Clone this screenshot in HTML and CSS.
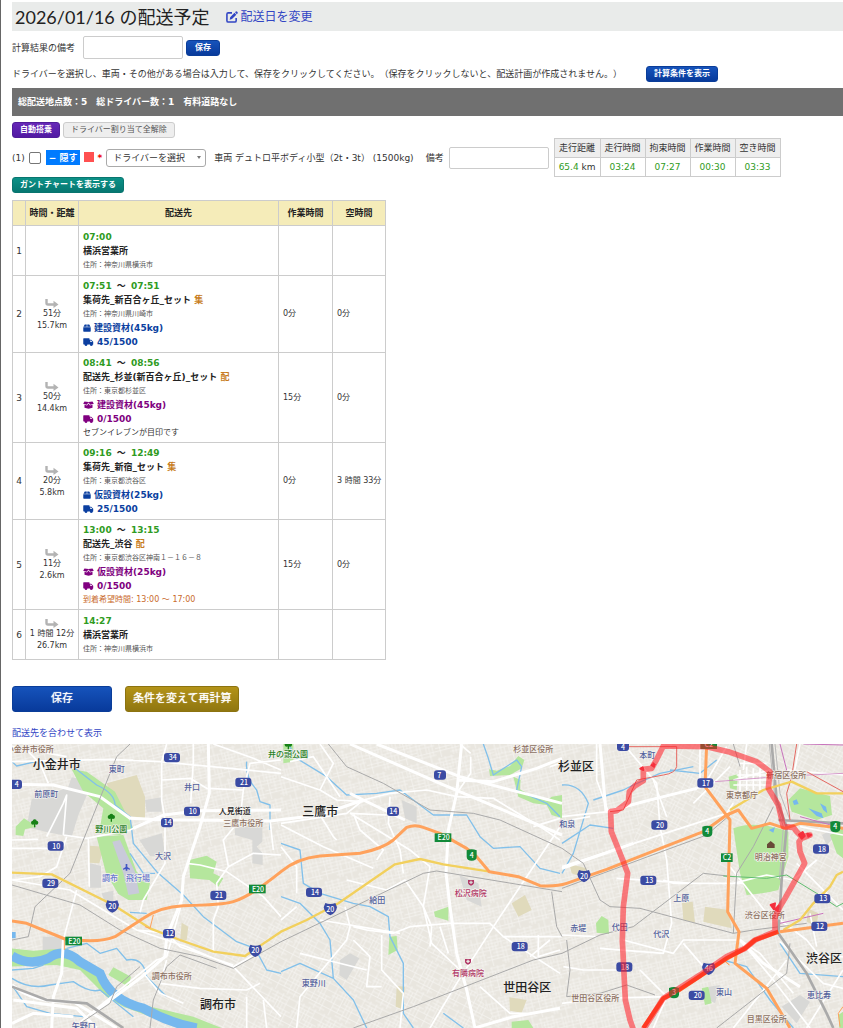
FILE: index.html
```html
<!DOCTYPE html>
<html lang="ja">
<head>
<meta charset="utf-8">
<meta name="viewport" content="width=device-width, initial-scale=1">
<title>配送予定</title>
<link rel="stylesheet" href="styles.css">
</head>
<body>
<svg class="defs" aria-hidden="true">
  <symbol id="i-arrow" viewBox="0 0 14 9"><path d="M1.500 0V4Q1.500 5.500 3 5.500H9" fill="none" stroke="#b3b3b3" stroke-width="2.400"/><path d="M8.500 1.800L13.500 5.500L8.500 9Z" fill="#b3b3b3"/></symbol>
  <symbol id="i-box" viewBox="0 0 9 9"><path d="M2 0.500H4.200V3H.5ZM4.800.5H7L8.500 3H4.800ZM.3 3.600H8.700V8Q8.700 8.700 8 8.700H1Q.3 8.700 .3 8Z" fill="currentColor"/></symbol>
  <symbol id="i-open" viewBox="0 0 12 9"><path d="M1.500.5L6 1.200L10.500.5L12 3.200L8 4.200L6 1.700L4 4.200L0 3.200ZM1.500 4.300L4.300 5L6 2.800L7.700 5L10.500 4.300V7.500L6 8.800L1.500 7.500Z" fill="currentColor"/></symbol>
  <symbol id="i-truck" viewBox="0 0 12 9"><path d="M.7.2H6.600Q7.200.2 7.200.8V2H9L11.300 4.300V7.200H10.800A1.600 1.600 0 0 1 7.500 7.200H4.800A1.600 1.600 0 0 1 1.500 7.200H.7Q.1 7.200 .1 6.600V.8Q.1.2 .7.2ZM8 2.900V4.500H10.300L8.700 2.900Z" fill="currentColor" fill-rule="evenodd"/><circle cx="3.200" cy="7.500" r="1.200" fill="currentColor"/><circle cx="9.200" cy="7.500" r="1.200" fill="currentColor"/></symbol>
</svg>
<main class="page">
  <header class="title-bar">
    <h1>2026/01/16 の配送予定</h1>
    <a class="date-link" href="#"><svg class="edit" viewBox="0 0 13 13" aria-hidden="true"><path d="M6.500 2H2.500Q1 2 1 3.500V10.500Q1 12 2.500 12H9.500Q11 12 11 10.500V7.500" fill="none" stroke="currentColor" stroke-width="1.700"/><path d="M4 9.500L4.500 6.700L9.200 2L11.200 4L6.500 8.800ZM9.800 1.400L10.600.6Q11.300 0 12 .7L12.500 1.200Q13 1.900 12.500 2.600L11.700 3.400Z" fill="currentColor"/></svg>配送日を変更</a>
  </header>
  <div class="note-row">
    <label for="note">計算結果の備考</label>
    <input class="field note" id="note" type="text">
    <button class="btn blue" type="button">保存</button>
  </div>
  <div class="help-row">
    <p>ドライバーを選択し、車両・その他がある場合は入力して、保存をクリックしてください。（保存をクリックしないと、配送計画が作成されません。）</p>
    <button class="btn blue" type="button">計算条件を表示</button>
  </div>
  <div class="summary">総配送地点数：5　総ドライバー数：1　有料道路なし</div>
  <div class="actions">
    <button class="btn purple" type="button">自動搭乗</button>
    <button class="btn plain" type="button">ドライバー割り当て全解除</button>
  </div>
  <div class="driver-row">
    <label class="number" for="driver-check">(1)</label>
    <input class="check" id="driver-check" type="checkbox">
    <button class="hide" type="button">− 隠す</button>
    <span class="swatch"></span>
    <span class="required">*</span>
    <span class="select-wrap"><select class="select" aria-label="ドライバー"><option>ドライバーを選択</option></select></span>
    <span class="vehicle">車両 デュトロ平ボディ小型（2t・3t） (1500kg)</span>
    <label class="remark-label" for="remark">備考</label>
    <input class="field remark" id="remark" type="text">
    <table class="totals">
      <thead><tr><th>走行距離</th><th>走行時間</th><th>拘束時間</th><th>作業時間</th><th>空き時間</th></tr></thead>
      <tbody><tr><td><b>65.4</b> km</td><td><b>03:24</b></td><td><b>07:27</b></td><td><b>00:30</b></td><td><b>03:33</b></td></tr></tbody>
    </table>
  </div>
  <button class="btn teal" type="button">ガントチャートを表示する</button>

  <table class="plan">
    <colgroup><col class="c-no"><col class="c-time"><col class="c-dest"><col class="c-work"><col class="c-free"></colgroup>
    <thead><tr><th></th><th>時間・距離</th><th>配送先</th><th>作業時間</th><th>空時間</th></tr></thead>
    <tbody>
      <tr><td class="no">1</td><td></td><td><p class="t">07:00</p><p class="name">横浜営業所</p><p class="addr">住所：神奈川県横浜市</p></td><td></td><td></td></tr>
      <tr><td class="no">2</td><td class="leg"><svg class="arrow"><use href="#i-arrow"/></svg><p>51分</p><p>15.7km</p></td><td><p class="t">07:51 <i>～</i> 07:51</p><p class="name">集荷先_新百合ヶ丘_セット <em>集</em></p><p class="addr">住所：神奈川県川崎市</p><p class="load"><svg class="box"><use href="#i-box"/></svg>建設資材(45kg)</p><p class="load"><svg class="wide"><use href="#i-truck"/></svg>45/1500</p></td><td>0分</td><td>0分</td></tr>
      <tr><td class="no">3</td><td class="leg"><svg class="arrow"><use href="#i-arrow"/></svg><p>50分</p><p>14.4km</p></td><td><p class="t">08:41 <i>～</i> 08:56</p><p class="name">配送先_杉並(新百合ヶ丘)_セット <em>配</em></p><p class="addr">住所：東京都杉並区</p><p class="load drop"><svg class="wide"><use href="#i-open"/></svg>建設資材(45kg)</p><p class="load drop"><svg class="wide"><use href="#i-truck"/></svg>0/1500</p><p class="memo">セブンイレブンが目印です</p></td><td>15分</td><td>0分</td></tr>
      <tr><td class="no">4</td><td class="leg"><svg class="arrow"><use href="#i-arrow"/></svg><p>20分</p><p>5.8km</p></td><td><p class="t">09:16 <i>～</i> 12:49</p><p class="name">集荷先_新宿_セット <em>集</em></p><p class="addr">住所：東京都渋谷区</p><p class="load"><svg class="box"><use href="#i-box"/></svg>仮設資材(25kg)</p><p class="load"><svg class="wide"><use href="#i-truck"/></svg>25/1500</p></td><td>0分</td><td>3 時間 33分</td></tr>
      <tr><td class="no">5</td><td class="leg"><svg class="arrow"><use href="#i-arrow"/></svg><p>11分</p><p>2.6km</p></td><td><p class="t">13:00 <i>～</i> 13:15</p><p class="name">配送先_渋谷 <em>配</em></p><p class="addr">住所：東京都渋谷区神南１－１６－８</p><p class="load drop"><svg class="wide"><use href="#i-open"/></svg>仮設資材(25kg)</p><p class="load drop"><svg class="wide"><use href="#i-truck"/></svg>0/1500</p><p class="memo wish">到着希望時間: 13:00 ～ 17:00</p></td><td>15分</td><td>0分</td></tr>
      <tr><td class="no">6</td><td class="leg"><svg class="arrow"><use href="#i-arrow"/></svg><p>1 時間 12分</p><p>26.7km</p></td><td><p class="t">14:27</p><p class="name">横浜営業所</p><p class="addr">住所：神奈川県横浜市</p></td><td></td><td></td></tr>
    </tbody>
  </table>

  <div class="submit-row">
    <button class="btn big blue" type="button">保存</button>
    <button class="btn big gold" type="button">条件を変えて再計算</button>
  </div>
  <a class="fit-link" href="#">配送先を合わせて表示</a>

  <svg class="map" viewBox="36 12 2493 852" preserveAspectRatio="xMinYMin slice" role="img" aria-label="配送ルートの地図">
    <defs>
      <pattern id="streets" width="150" height="132" patternUnits="userSpaceOnUse" patternTransform="rotate(-14) scale(.7)">
        <path d="M0 8H70M0 22H150M12 35H92M0 50H60M80 47H150M0 63H150M30 77H150M0 91H72M0 105H150M60 119H150M8 0V50M20 22V132M34 0V63M47 35V105M60 0V50M73 22V132M86 63V132M99 0V63M111 22V105M124 0V47M124 77V132M138 22V119" fill="none" stroke="#fff" stroke-width="3"/>
      </pattern>
      <pattern id="streets-b" width="126" height="138" patternUnits="userSpaceOnUse" patternTransform="rotate(27) scale(.7)">
        <path d="M0 9H126M20 24H90M0 39H126M0 54H48M60 66H126M0 81H126M24 96H80M0 111H126M50 125H126M9 0V81M24 39V138M38 0V54M52 24V111M66 0V66M79 39V138M93 0V111M108 66V138" fill="none" stroke="#fff" stroke-width="3"/>
      </pattern>
      <g id="tag"><rect x="-24" y="-14" width="48" height="28" rx="9" fill="#3b4ba3"/></g>
      <g id="tag-s"><rect x="-18" y="-14" width="36" height="28" rx="9" fill="#3b4ba3"/></g>
      <path id="shield" d="M-15-18Q0-12 15-18L20-5Q17 13 0 19Q-17 13-20-5Z" fill="#3b4ba3"/>
      <path id="gshield" d="M-15-14Q0-20 15-14V5Q15 17 0 17Q-15 17-15 5Z" fill="#128a39"/>
      <rect id="gtag" x="-25" y="-13" width="50" height="26" fill="#128a39"/>
      <g id="tree" fill="#168116"><circle cx="-5" cy="-2" r="6"/><circle cx="5" cy="-2" r="6"/><circle cy="-6" r="6"/><path d="M-2 0H2V12H-2Z"/></g>
      <path id="hospital" d="M-9-7H9V3Q7 9 0 10Q-7 9-9 3ZM-2-5V-2H-5V2H-2V5H2V2H5V-2H2V-5Z" fill="#b23a68" fill-rule="evenodd"/>
    </defs>
    <rect x="0" y="0" width="2600" height="900" fill="#e9e6df"/>
    <rect x="0" y="0" width="2600" height="900" fill="url(#streets)" opacity=".6"/>
    <path d="M420 864L560 500L900 470L1300 560L1500 864ZM2000 12L1900 300L2300 500L2529 460V12Z" fill="#e9e6df"/>
    <path d="M420 864L560 500L900 470L1300 560L1500 864ZM2000 12L1900 300L2300 500L2529 460V12Z" fill="url(#streets-b)" opacity=".6"/>

    <g class="land">
      <path class="grey" d="M95 178L160 160L205 140L215 112L245 118L265 155L235 225L215 290L150 278L80 262ZM270 370L303 378V443H270ZM305 460L340 452V482L315 488ZM418 300L486 280L496 352L450 348ZM435 180L485 172V215H440ZM128 590H190V630H128ZM705 265L787 250V305L770 320L788 340V375L757 370V300L705 285ZM1205 180L1250 200V250L1215 235ZM1378 405L1435 430L1445 500L1400 480ZM1020 660L1050 640L1078 655L1040 720L1018 705ZM2126 740L2160 735L2145 790L2118 775ZM2466 285L2500 265L2505 290L2480 315ZM2345 800L2400 765L2430 785L2390 850Z"/>
      <path class="tan" d="M320 130L410 105L435 170V235L370 225L340 190ZM270 317L312 320L298 370L268 368ZM545 548L565 560L560 600L540 605ZM1535 490L1575 465L1595 510L1555 530ZM1190 738L1215 740L1208 808L1187 800ZM1528 772L1580 780L1565 818L1530 812ZM1708 372L1760 385L1745 410L1715 400ZM2046 488L2078 485L2085 548L2050 540ZM2115 500L2185 510L2195 565L2110 545ZM2423 505L2455 520L2450 560L2420 545Z"/>
      <path class="green" d="M215 88L260 95L345 155L380 225L400 265L360 285L297 280L310 205L250 155ZM47 260L72 235L110 260L75 268L70 288L47 285ZM290 290L370 285L410 395L450 430L440 480H385L355 462L318 400ZM568 360L620 347L650 365L640 400L670 415L655 440L628 420L570 415ZM30 625L100 632L200 625L270 670L345 765L430 795L580 830L680 870H560L370 800L320 770L240 690L170 675L30 680ZM340 682L393 710L385 740L325 705ZM850 12H880V65L850 70ZM1302 515L1345 500V542L1305 530ZM1168 590L1190 588L1193 630L1165 645ZM1467 88L1490 92L1530 78L1555 48L1573 60L1565 85L1530 105L1470 108ZM1540 110L1562 120L1560 148L1600 170L1640 182L1655 170L1686 165V235L1655 225L1640 195L1600 190L1555 170ZM1535 845L1585 840L1600 864H1535ZM2200 265Q2270 240 2365 275V350L2335 450Q2300 460 2240 465L2220 400ZM2365 180L2400 145L2490 168L2496 225L2450 240L2375 215ZM1788 550L1805 528L1825 540L1827 582L1790 578ZM2186 110L2214 102L2210 150L2190 145ZM2490 285L2529 265V355L2510 340ZM2105 745L2125 740L2135 790L2115 795ZM2515 825L2529 815V864H2518Z"/>
      <path fill="#c9cad9" d="M337 305L360 300L405 395L418 460L385 465L370 400Z"/>
    </g>
    <path d="M36 648Q90 680 145 655Q190 620 240 665L300 700Q330 780 430 805Q510 850 590 864" fill="none" stroke="#76b8ee" stroke-width="28"/>
    <path d="M36 576H47V595H36M2378 183L2390 178L2396 192L2382 195ZM2425 205L2465 220L2470 235L2450 228ZM2460 190L2478 200L2482 220L2470 210ZM2306 270L2325 262L2320 278Z" fill="#76b8ee"/>
    <g class="stream">
      <path d="M36 65L50 78L120 62M225 85L290 135Q345 160 345 195L390 230Q395 265 400 310L470 395L550 465L610 530L710 605L765 625L800 690L843 700M740 65Q735 110 770 150L780 185L810 195V270M200 625L260 610L300 640L350 625L380 660Q430 650 440 710L500 770M36 715Q90 750 150 735L220 725Q270 760 300 750L400 830M36 735L80 800L150 820L250 830M390 517L440 520M390 340L430 400L465 400M36 690L100 685L130 675"/>
      <path d="M865 12L890 55L980 110L1040 165L1130 160L1200 150L1300 225L1400 225L1440 290L1480 325L1560 320L1620 385L1680 400M1450 12L1465 55L1480 105L1550 60L1565 80L1550 150L1640 190L1680 230M843 310L900 330L910 430L960 460L1060 490L1110 500L1165 530L1170 590L1210 670L1210 820L1240 864M843 470L900 490L960 550L990 600L1000 715L1060 780L1100 864M1000 715L900 670L843 695M1330 820L1390 864"/>
      <path d="M1686 135Q1740 130 1765 190L1720 340L1686 400M1686 310L1770 255L1840 265M1780 180L1870 150L1900 135L1980 100L2080 80M2150 60L2100 100L2010 90M2170 660L2240 680L2310 780L2380 864M2340 610L2400 700L2529 710"/>
    </g>
    <g class="minor">
      <path d="M36 65L330 58L480 65L843 100M330 60L400 60M70 20L120 70L145 130M140 290L190 190L200 165L190 285M36 325H160M36 300L115 298M200 290L170 380L120 410L36 420M190 285L260 295L390 270L450 240M500 12L485 65V180L495 240V370L430 480L420 517M580 12V65L572 190M485 120L570 115L620 145L730 150L720 240L670 300L685 380L650 430L655 500L640 540V640M730 150L750 70L843 60M560 370L600 375L680 395L790 470L843 530M685 380L760 340L843 345M265 295L268 440M230 450L190 600M36 420L210 450L410 570L560 620L700 680L843 830M410 570L460 575L500 580M545 490L500 650L470 660L260 830L220 864M430 700L480 760L550 790M500 660L480 730L600 745L740 750L780 730M500 580L540 620L700 675M700 680L770 640M740 770L740 864M790 780L800 864M36 20L200 50M640 12L760 55L843 90M810 240L820 330"/>
      <path d="M843 110L960 150L1010 180L1090 185M843 255L970 320L1120 385M960 225L1000 290L1010 300M1060 220L1080 270L1150 330L1130 360M1170 170L1165 250L1200 330L1210 400M960 12L1000 70L960 150M870 65L940 50L970 95L1020 170M843 250L1040 220L1090 180L1170 160L1280 150L1370 170L1480 175L1620 260L1680 300M1050 220L1160 225M1050 220L1230 330L1290 380M1040 420L1160 450L1215 420L1270 500L1295 560M843 540L890 500M1035 500L1050 560L1040 600L900 770L890 864M1060 560L1100 570L1180 580L1230 560L1350 550H1470L1510 590H1686M1145 585V690L1210 760L1200 864M1290 380L1270 500L1295 610L1380 690M1320 560L1345 640M1295 560L1290 620M960 540L1200 580M900 640L1100 690M1290 864L1370 730L1500 530L1680 260M1440 740L1530 820H1580M1510 590L1680 700M1615 585V650L1680 630M1600 260L1680 235M1380 12L1412 40M1412 50V100L1370 160M1060 600L1110 650L1100 740H1145M1650 80L1680 70M843 320L890 380L890 460M1590 650L1650 600M1710 240L1770 230"/>
      <path d="M1686 230L1825 215L1990 170L2110 140L2180 20M1686 380L2180 220L2200 190M1790 12V120L1825 215M1870 12L1970 130L1980 260L2000 360L2015 550L1990 640L1800 625M1960 120L2000 230M1850 415L2080 430L2200 430L2300 405L2380 420L2450 360M1990 420L2020 430L2230 430M1686 585L1790 590M1870 600L2020 640L2050 600L2220 600L2280 640L2380 760M2220 600L2320 720L2430 864M1870 690H1750L1690 680M1686 790L1800 775L2000 770M1920 690L2000 770L1960 864M2050 610L2110 680M2340 540L2420 600L2460 650L2529 650M2430 520L2450 620M2200 120L2310 90M2214 70H2300M2400 12L2380 110M2400 260L2529 285M2390 370L2529 510M2190 380L2300 520M2100 20V120M2240 12L2230 90M2340 605L2470 730L2529 745M2200 864L2330 700L2360 660M2420 864L2529 690M2080 190L2190 80M2360 90L2529 105M2220 90V155M2240 80V150M2260 85V150M2280 85V150M2210 105H2310M2205 120H2310M2200 135H2310"/>
    </g>
    <g class="major">
      <path d="M36 133L160 135L300 170L390 235L500 240H600L810 243L960 225L1090 180L1050 160M400 265L490 225L600 212L843 210M625 12L628 160L600 260L550 410L545 480L500 590L495 650L420 715L270 825M190 600L185 700L160 770L155 864M36 735Q100 790 220 785L350 864M40 780L230 805L290 864M36 850L100 820L220 830M1090 180L1215 240M1130 12L1380 110L1610 170L1686 190M1050 12L1320 130L1686 285M1385 12L1370 160L1345 270L1338 400L1350 500L1370 640L1400 750L1425 864M1370 120L1480 125L1610 85L1686 55M1425 864L1540 830L1680 805"/>
      <path d="M1800 12L1818 215M1818 215L1930 185L2090 145M1686 385L1900 310M2220 600L2290 670L2400 740"/>
    </g>
    <g class="rail">
      <path d="M390 12L350 50L310 150L210 400L105 500L85 590L36 600M36 435L240 495L360 570L480 625L600 650L700 685L843 605L1270 400L1310 393L1686 455M220 864L330 790L350 740L420 680M450 864L460 780L500 680L540 645L650 685M985 12L1040 80L1150 130L1290 210L1420 220L1500 240L1686 325M1060 864L1240 800L1600 660L1686 640M1655 455L1670 560L1686 590"/>
      <path d="M1686 445L2120 285L2190 225M1686 325L1750 370L1800 480L1830 500L1920 505L2200 580L2260 570L2420 550M1686 640L1800 585L1900 560L2110 400L2200 410M2200 580L2210 400L2260 320L2320 200M1700 600L1710 690L1700 770L1800 760L1880 735L1965 765M2150 864L2360 700L2370 610M2200 12L2220 80"/>
    </g>
    <path d="M2315 12L2330 180L2360 260L2345 420L2335 580L2420 700L2480 820L2500 864M2335 240L2529 250M36 740L140 780L260 790L370 864" fill="none" stroke="#aaa" stroke-width="8"/>
    <path d="M2308 12L2325 180L2350 260L2338 420M2325 12L2340 160L2370 240" fill="none" stroke="#bbb" stroke-width="3"/>
    <path d="M2145 125L2330 110L2529 100" fill="none" stroke="#c873bd" stroke-width="2"/>
    <path d="M2340 12L2360 90L2330 120M2410 12L2529 15M2340 550L2470 520M2400 230L2529 265" fill="none" stroke="#c873bd" stroke-width="3"/>
    <path d="M2170 408L2300 415L2360 405L2450 460L2510 500L2529 490" fill="none" stroke="#62bd72" stroke-width="3"/>
    <path d="M2340 100L2420 95L2529 155M2390 12L2375 110L2360 160L2370 240M1860 20L2030 20L2030 80Q2025 100 1990 105L1910 120L1870 210L1830 215" fill="none" stroke="#e56963" stroke-width="3"/>

    <g class="yellow">
      <path d="M36 398L155 403L340 495L450 565L540 600L640 635L735 648L843 575L920 540L1015 490L1185 373L1260 357L1330 373L1470 395"/>
      <path d="M2190 210L2290 150L2375 125L2450 160H2529M2350 570L2400 540L2440 490L2490 440L2510 405L2529 395"/>
    </g>
    <g class="orange">
      <path d="M36 543L80 550L195 597Q300 610 345 590L430 535Q480 500 550 497Q670 495 700 485Q750 470 843 395Q890 355 960 348L1080 340Q1150 325 1180 300L1220 262Q1245 252 1270 262L1320 280L1400 325L1430 350L1468 395L1555 410L1620 437Q1670 440 1700 430L1820 388L2110 275L2180 225L2215 210L2255 265L2310 250L2355 265L2400 250L2529 265M2120 12L2115 140L2190 240L2183 515L2217 575L2205 670L2300 745L2370 864M2340 575L2529 550"/>
      <path class="ramp" d="M460 525L450 565L435 560M193 600V630M2170 660L2188 675L2178 665M2529 800L2515 820L2520 860"/>
    </g>
    <path d="M1930 864L1990 775L2030 755L2180 655L2235 625L2265 600L2335 575" fill="none" stroke="#ff5b1d" stroke-width="13"/>

    <g class="town">
      <text x="98" y="86">小金井市</text><text x="600" y="806">調布市</text><text x="907" y="228">三鷹市</text><text x="1510" y="756">世田谷区</text><text x="1674" y="94">杉並区</text><text x="2418" y="669">渋谷区</text>
    </g>
    <g class="area">
      <text x="326" y="96">東町</text><text x="103" y="171">前原町</text><text x="552" y="151">井口</text><text x="465" y="358">大沢</text><text x="1108" y="490">給田</text><text x="905" y="739">東野川</text><text x="215" y="868">矢野口</text><text x="306" y="424" fill="#6878cd">調布　飛行場</text><text x="1918" y="55">本町</text><text x="1678" y="262">和泉</text><text x="2020" y="484">上原</text><text x="1711" y="573">赤堤</text><text x="1835" y="571">代田</text><text x="1960" y="592">代沢</text><text x="2148" y="764">東山</text><text x="2421" y="774">恵比寿</text>
    </g>
    <g class="office">
      <text x="17" y="36">小金井市役所</text><text x="670" y="258">三鷹市役所</text><text x="455" y="718">調布市役所</text><text x="1540" y="36">杉並区役所</text><text x="2299" y="114">新宿区役所</text><text x="2178" y="175">東京都庁</text><text x="2234" y="535">渋谷区役所</text><text x="1714" y="782">世田谷区役所</text><text x="2240" y="846">目黒区役所</text><text x="2264" y="359">明治神宮</text>
    </g>
    <g class="park"><text x="286" y="276">野川公園</text><text x="804" y="52">井の頭公園</text></g>
    <text class="road" x="656" y="222">人見街道</text>
    <g class="clinic"><text x="1364" y="469">松沢病院</text><text x="1356" y="708">有隣病院</text></g>
    <use href="#tree" x="104" y="250"/><use href="#tree" x="334" y="233"/><use href="#tree" x="865" y="16"/><use href="#hospital" x="1413" y="427"/><use href="#hospital" x="1404" y="664"/>
    <path d="M377 372H382V381L390 386V389L382 387V392H377V387L369 389V386L377 381Z" fill="#4054c4"/>
    <path d="M2301 313L2312 303L2324 313V324H2301Z" fill="#684a38"/>

    <g class="badge">
      <use href="#tag" x="516" y="53"/><text x="518" y="61">34</text>
      <use href="#tag-s" x="48" y="133"/><text x="50" y="141">4</text>
      <use href="#tag" x="730" y="127"/><text x="732" y="135">21</text>
      <use href="#tag" x="576" y="214"/><text x="578" y="222">10</text>
      <use href="#tag-s" x="501" y="248"/><text x="503" y="256">14</text>
      <use href="#tag" x="167" y="318"/><text x="169" y="326">10</text>
      <use href="#tag" x="151" y="430"/><text x="153" y="438">29</text>
      <use href="#tag" x="655" y="466"/><text x="657" y="474">21</text>
      <use href="#tag-s" x="507" y="581"/><text x="509" y="589">12</text>
      <use href="#shield" x="337" y="499"/><text x="337" y="507">20</text>
      <use href="#shield" x="766" y="632"/><text x="766" y="640">20</text>
      <use href="#gtag" x="772" y="447"/><text x="774" y="455">E20</text>
      <use href="#gtag" x="221" y="603"/><text x="223" y="611">E20</text>
      <use href="#tag-s" x="1320" y="105"/><text x="1318" y="113">7</text>
      <use href="#tag-s" x="1179" y="214"/><text x="1180" y="222">14</text>
      <use href="#gtag" x="1329" y="293"/><text x="1331" y="301">E20</text>
      <use href="#gshield" x="1415" y="345"/><text x="1415" y="353">4</text>
      <use href="#tag" x="942" y="457"/><text x="945" y="465">14</text>
      <use href="#shield" x="991" y="507"/><text x="991" y="515">20</text>
      <use href="#tag" x="1559" y="620"/><text x="1562" y="628">18</text>
      <use href="#tag-s" x="1869" y="19"/><text x="1869" y="29">4</text>
      <use href="#gtag" x="2126" y="14"/><text x="2126" y="22">C2</text>
      <use href="#tag" x="2116" y="129"/><text x="2118" y="137">17</text>
      <use href="#tag" x="1978" y="255"/><text x="1980" y="263">20</text>
      <use href="#gshield" x="2122" y="274"/><text x="2122" y="282">4</text>
      <use href="#gshield" x="2506" y="260"/><text x="2506" y="268">4</text>
      <use href="#tag" x="2463" y="327"/><text x="2466" y="335">18</text>
      <rect x="2163" y="340" width="35" height="26" fill="#128a39"/><text x="2181" y="361">C2</text>
      <use href="#shield" x="1752" y="408"/><text x="1752" y="416">20</text>
      <use href="#tag" x="1945" y="421"/><text x="1948" y="429">13</text>
      <use href="#tag" x="2467" y="476"/><text x="2470" y="484">13</text>
      <use href="#tag" x="2458" y="559"/><text x="2460" y="567">12</text>
      <use href="#tag" x="1873" y="681"/><text x="1875" y="689">18</text>
      <use href="#shield" x="2126" y="686"/><text x="2126" y="694">46</text>
      <use href="#gshield" x="2022" y="758"/><text x="2022" y="766">3</text>
      <use href="#tag" x="2090" y="766"/><text x="2093" y="774">20</text>
    </g>

    <g class="route">
      <path d="M1904 880L1890 840L1876 780L1867 600L1870 500L1883 400L1870 365L1834 275L1832 215L1850 212L1885 185L1888 155L1904 138L1930 122V88L1955 85L1968 62L1990 18L2120 20L2185 35L2270 65L2310 95L2305 145L2335 195L2350 260L2380 262L2390 275L2405 290L2430 285L2405 295L2397 305L2400 335L2414 370L2355 475L2340 500L2325 530L2325 575L2265 600L2235 625L2180 650L2100 705L1990 775L1920 885"/>
    </g>
    <path d="M1921 86L1928 82L1930 90ZM1953 74L1962 80L1960 70L1966 76M2397 284L2408 276L2414 288L2405 296ZM2422 281L2433 285L2425 290ZM2312 495L2325 490L2322 508ZM2325 508L2336 497L2333 513Z" fill="#f52f3c" stroke="#f52f3c" stroke-width="6" stroke-linejoin="round"/>
  </svg>
</main>
</body>
</html>
```

FILE: styles.css
```css
* { box-sizing: border-box; }
body {
  margin: 0;
  background: #fff;
  color: #333;
  font: 9px/14px "DejaVu Sans", "Noto Sans CJK JP", sans-serif;
  text-spacing-trim: space-all;
}
p, h1 { margin: 0; }
button, input, select { font: inherit; color: inherit; margin: 0; }
a { color: #3145c4; text-decoration: none; }
.defs { display: none; }
.page {
  border-left: 1px solid #666;
  padding: 2px 0 0 11px;
  display: flex;
  flex-direction: column;
  align-items: flex-start;
  overflow: hidden;
}

.title-bar {
  align-self: stretch;
  display: flex;
  align-items: center;
  gap: 17px;
  height: 29px;
  padding-left: 3px;
  background: #e9ebea;
}
.title-bar h1 { font: 400 18px/28px Lato, "Noto Sans CJK JP", sans-serif; color: #222; }
.date-link { display: flex; align-items: center; gap: 2px; font-size: 12px; }
.edit { width: 12px; height: 12px; }

.note-row { display: flex; align-items: center; margin-top: 5px; height: 23px; }
.field { border: 1px solid #ccc; border-radius: 2px; background: #fff; height: 22px; width: 100px; padding: 2px 4px; }
.note { height: 23px; margin: 0 3px 0 8px; }

.btn {
  height: 16px;
  padding: 0 7px;
  border: 1px solid;
  border-radius: 3px;
  color: #fff;
  font-size: 8px;
  font-weight: 700;
  line-height: 12px;
  white-space: nowrap;
}
.blue { background: linear-gradient(#1653bb, #083a9b); border-color: #0a3d99; }
.note-row .btn { padding: 0 8px; }
.purple { background: linear-gradient(#6728b8, #521aa3); border-color: #501c99; }
.plain { background: #eee; border-color: #ccc; color: #555; font-weight: 400; }
.teal { background: linear-gradient(#0c9187, #067771); border-color: #08756f; }
.gold { background: linear-gradient(#b39318, #8f7610); border-color: #8c7310; }

.help-row { display: flex; align-items: center; gap: 24px; margin-top: 7px; min-height: 16px; }
.summary {
  align-self: stretch;
  margin-top: 6px;
  padding: 0 6px;
  background: #707070;
  color: #fff;
  font-weight: 700;
  line-height: 28px;
}
.actions { display: flex; gap: 3px; margin-top: 6px; }

.driver-row { display: flex; align-items: center; white-space: nowrap; }
.check { appearance: none; width: 12px; height: 12px; margin: 0 5px 0 4px; border: 1px solid #767676; border-radius: 2px; background: #fff; }
.hide { height: 15px; padding: 0 3px; border: 0; background: #007bff; color: #fff; font-weight: 700; line-height: 14px; }
.swatch { width: 10px; height: 10px; margin: 0 3px 2px 4px; background: #ff5050; }
.required { color: #e00; font-weight: 700; margin-right: 4px; }
.select-wrap { position: relative; margin-right: 8px; }
.select { appearance: none; display: block; width: 100px; height: 18px; padding: 0 6px; border: 1px solid #aaa; border-radius: 3px; background: #fff; }
.select-wrap::after {
  content: "";
  position: absolute;
  right: 5px;
  top: 7px;
  border: 2px solid transparent;
  border-top: 3px solid #777;
}
.remark-label { margin-left: 12px; }
.remark { margin: 0 5px; }

.totals { border-collapse: collapse; text-align: center; }
.totals th, .totals td { border: 1px solid #ccc; padding: 2px 4px; height: 19px; font-weight: 400; }
.totals th { background: #eee; }
.totals b { font-weight: 400; color: #2f9b22; }

.plan { margin-top: 7px; width: 374px; border-collapse: collapse; table-layout: fixed; font-size: 8px; line-height: 12px; }
.c-no { width: 13px; }
.c-time { width: 53px; }
.c-dest { width: 200px; }
.c-work { width: 54px; }
.c-free { width: 53px; }
.plan th, .plan td { border: 1px solid #ccc; white-space: nowrap; }
.plan th { height: 25px; padding: 0; background: #f5ecb9; color: #222; font-size: 9px; }
.plan td { height: 50px; padding: 3px 4px; }
.plan .no { padding: 0; text-align: center; font-size: 9px; }
.plan .leg { padding: 0; text-align: center; }
.arrow { display: block; width: 14px; height: 9px; margin: 2px auto 0; }
.t, .name, .load { font-size: 9px; font-weight: 700; line-height: 14px; color: #222; }
.t { color: #2f9b22; }
.t i { color: #222; font-style: normal; padding: 0 2px; }
.name em { color: #c77c20; font-style: normal; }
.addr { font-size: 7px; line-height: 14px; color: #555; }
.load { color: #0b3fa0; }
.drop { color: #800080; }
.box, .wide { width: 8px; height: 8px; margin-right: 3px; vertical-align: -1px; }
.wide { width: 11px; }
.memo { line-height: 13px; }
.wish { color: #c96a2c; }

.submit-row { display: flex; gap: 13px; margin-top: 26px; }
.big { height: 26px; min-width: 100px; font-size: 11px; font-weight: 400; line-height: 20px; text-shadow: 0 0 1px #fff; }
.fit-link { margin: 14px 0 4px; }

.map { display: block; align-self: stretch; width: 100%; height: 284px; font-family: "Noto Sans CJK JP", sans-serif; }
.grey { fill: #d8d8d6; }
.tan { fill: #e0dabc; }
.green { fill: #b5e69d; }
.stream, .minor, .major, .rail, .yellow, .orange, .route { fill: none; stroke-linejoin: round; }
.stream { stroke: #82c0ea; stroke-width: 4px; }
.minor { stroke: #fff; stroke-width: 5px; }
.major { stroke: #fff; stroke-width: 9px; }
.rail { stroke: #aaa; stroke-width: 3px; }
.yellow { stroke: #f2d05d; stroke-width: 7px; }
.orange { stroke: #ffa25c; stroke-width: 9px; }
.orange .ramp { stroke-width: 3px; }
.route { stroke: #ff1f28; stroke-width: 17px; opacity: .57; }
.town { font-size: 36px; font-weight: 500; fill: #222; }
.area, .office, .park, .clinic, .road { font-size: 24px; font-weight: 500; stroke: #f4f2ee; stroke-width: 4px; paint-order: stroke; }
.area { fill: #53619c; }
.office { fill: #8c7061; }
.park { fill: #26801c; }
.clinic { fill: #b23a68; }
.road { fill: #222; }
.badge { font-size: 21px; font-weight: 500; fill: #fff; text-anchor: middle; }
```
